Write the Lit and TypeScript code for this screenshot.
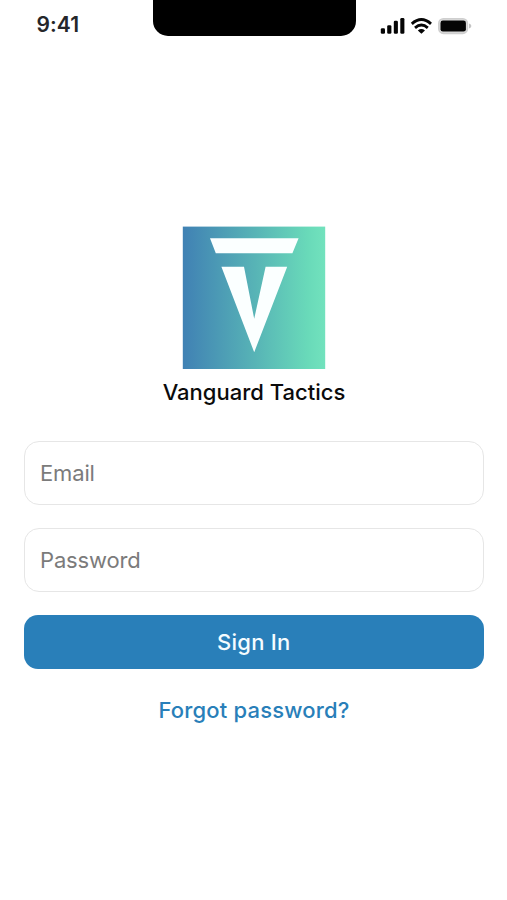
import { LitElement, html, css } from "lit";
import { customElement, property } from "lit/decorators.js";

@customElement("status-bar")
class StatusBar extends LitElement {
  static styles = css`
    :host { display: grid; grid-template-columns: 152.5px 203px 1fr; height: 52px; align-items: start; }
    .time { padding: 11px 0 0 36.5px; font-size: 21px; line-height: 28px; font-weight: 600; color: #25262a; letter-spacing: 0.1px; }
    .notch { height: 35.5px; background: #000; border-radius: 0 0 15px 15px; }
    .icons { display: block; margin: 15px 0 0 24.5px; }
  `;
  render() {
    return html`
      <div class="time">9:41</div>
      <div class="notch"></div>
      <svg class="icons" width="92" height="22" viewBox="380 15 92 22">
        <g fill="#050505">
          <rect x="380.8" y="28.2" width="4.2" height="5.6" rx="1.3" />
          <rect x="387.2" y="25.2" width="4.2" height="8.6" rx="1.3" />
          <rect x="393.8" y="20.8" width="4.1" height="13" rx="1.3" />
          <rect x="400.3" y="18" width="4.1" height="15.8" rx="1.3" />
          <path d="M417.8 30.4Q421.4 27.5 425 30.4L421.4 33.7Z" />
        </g>
        <g fill="none" stroke="#050505" stroke-width="2.9">
          <path d="M411.8 23.8Q421.4 15.4 431 23.8" />
          <path d="M415 27.8Q421.4 22.4 427.8 27.8" />
        </g>
        <rect x="438.8" y="18.8" width="28.6" height="14.6" rx="4.6" fill="#ddd" stroke="#cfcfcf" stroke-width="1.6" />
        <rect x="440.5" y="20.6" width="25.4" height="11" rx="2.4" fill="#050505" />
        <path d="M469 23.6q2.4 .8 2.4 2.5t-2.4 2.5z" fill="#c4c4c4" />
      </svg>
    `;
  }
}

@customElement("brand-mark")
class BrandMark extends LitElement {
  static styles = css`
    :host { display: flex; flex-direction: column; align-items: center; }
    .logo { display: block; }
    .name { margin: 5.5px 0 0; font-size: 22px; line-height: 32px; font-weight: 540; letter-spacing: 0; color: #0b0b0b; white-space: nowrap; }
  `;
  render() {
    return html`
      <svg class="logo" width="144" height="144" viewBox="0 0 144 144">
        <defs>
          <linearGradient id="fade" x1="0" y1="0" x2="1" y2="0">
            <stop offset="0" stop-color="#4081b4" />
            <stop offset="0.5" stop-color="#57b3b6" />
            <stop offset="0.88" stop-color="#69dab9" />
            <stop offset="1" stop-color="#72e2bd" />
          </linearGradient>
        </defs>
        <rect x="0.8" y="0.6" width="142.4" height="142.4" fill="url(#fade)" />
        <path d="M28 12.3H116.6L110.4 27.3H33.8Z M39.4 40.8H62L72.2 92.8L83.6 40.8H105.2L72.2 126.3Z" fill="#fbffff" />
      </svg>
      <h1 class="name">Vanguard Tactics</h1>
    `;
  }
}

@customElement("text-field")
class TextField extends LitElement {
  @property() label = "";
  @property() type = "text";
  static styles = css`
    :host { display: block; }
    .input { display: block; box-sizing: border-box; width: 100%; height: 64.5px; padding: 0 15.5px; border: 1.3px solid #e6e6e6; border-radius: 15px; background: #fff; font: 400 22px/30px Inter, sans-serif; color: #222; outline: none; }
    .input::placeholder { color: #7b7b7b; opacity: 1; letter-spacing: -0.15px; }
  `;
  render() {
    return html`<input class="input" type=${this.type} placeholder=${this.label} aria-label=${this.label} />`;
  }
}

@customElement("app-root")
class AppRoot extends LitElement {
  static styles = css`
    :host { display: block; box-sizing: border-box; height: 900px; background: #fff; font-family: Inter, "Liberation Sans", sans-serif; }
    .brand { margin-top: 174px; padding-left: 1px; }
    .form { display: flex; flex-direction: column; gap: 22.8px; padding: 0 23px 0 23.5px; margin-top: 33px; }
    .submit { height: 54px; border: 0; border-radius: 14px; padding: 0 0 1px; background: #297fb9; color: #f5fcff; font: inherit; font-size: 22px; font-weight: 540; letter-spacing: 0.25px; }
    .forgot { display: block; margin-top: 25.5px; padding-left: 1px; text-align: center; font-size: 22px; line-height: 30px; font-weight: 540; letter-spacing: 0.18px; color: #297fb9; text-decoration: none; }
  `;
  render() {
    return html`
      <status-bar></status-bar>
      <brand-mark class="brand"></brand-mark>
      <form class="form">
        <text-field label="Email" type="email"></text-field>
        <text-field label="Password" type="password"></text-field>
        <button class="submit" type="button">Sign In</button>
      </form>
      <a class="forgot" href="#">Forgot password?</a>
    `;
  }
}
